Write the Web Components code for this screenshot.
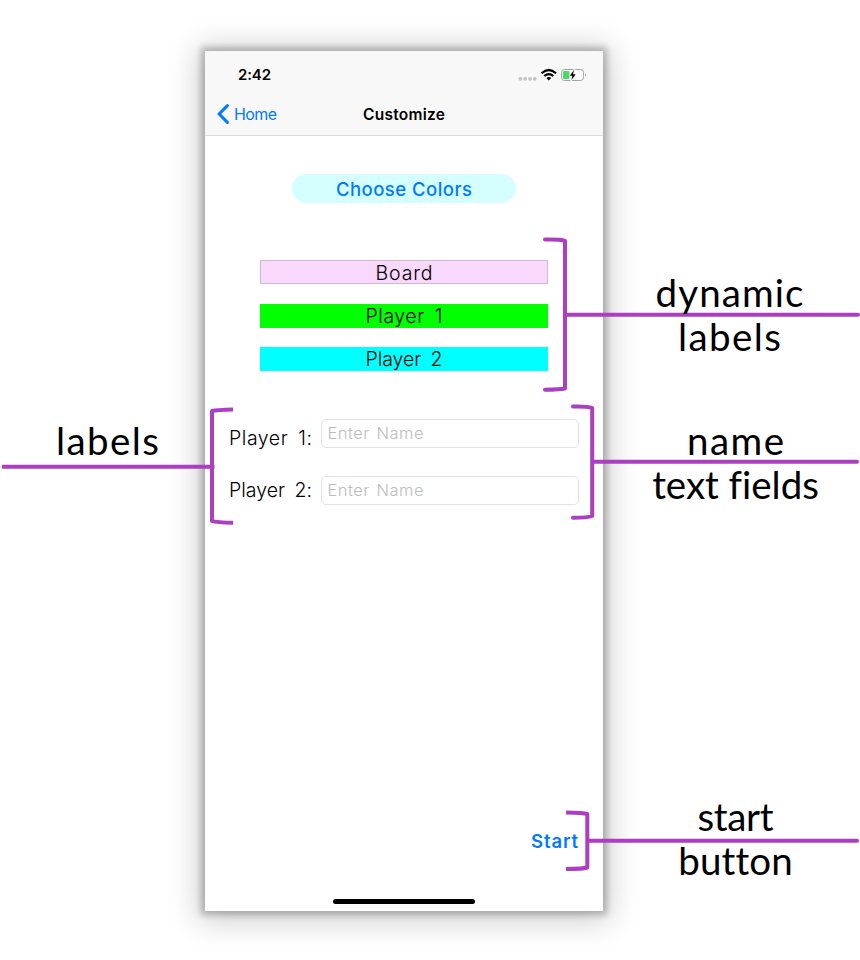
<!DOCTYPE html>
<html lang="en">
<head>
<meta charset="utf-8">
<title>Customize</title>
<style>
html,body{margin:0;background:#fff}
body{width:860px;height:960px;overflow:hidden}
</style>
</head>
<body>
<annotated-screen></annotated-screen>
<script>
const define = (name, html, init) => customElements.define(name, class extends HTMLElement {
  constructor() {
    super();
    this.attachShadow({mode: 'open'});
    const t = document.createElement('template');
    t.innerHTML = html;
    this.shadowRoot.append(t.content.cloneNode(true));
  }
  connectedCallback() { if (init) init(this, this.shadowRoot); }
});

// Text tracked so that its line fills the given width.
define('fit-text', `<style>:host{display:inline-block;white-space:pre}span{display:inline-block}</style><span><slot></slot></span>`, (el, root) => {
  const s = root.querySelector('span');
  const want = parseFloat(el.getAttribute('w'));
  requestAnimationFrame(() => {
    const n = el.textContent.length;
    const ls = (want - s.getBoundingClientRect().width) / (n - 1);
    s.style.letterSpacing = ls + 'px';
    s.style.marginRight = -ls + 'px';
  });
});

define('status-bar', `<style>
:host{display:flex;height:48px;box-sizing:border-box;padding:0 17px 0 33px;align-items:center;justify-content:space-between;font:600 15px/20px Inter,sans-serif;color:#000}
svg{display:block}
</style>
<fit-text w="33">2:42</fit-text>
<svg width="70" height="16" viewBox="0 0 70 16">
<g fill="#c2c2c2"><circle cx="4.4" cy="11.8" r="1.9"/><circle cx="9.2" cy="11.8" r="1.9"/><circle cx="14" cy="11.8" r="1.9"/><circle cx="18.8" cy="11.8" r="1.9"/></g>
<g fill="none" stroke="#000" stroke-width="2.2"><path d="M25.6 6.2Q32.8-.2 40 6.2"/><path d="M28.3 9Q32.8 5.1 37.3 9"/></g>
<path d="M30.4 11Q32.8 9 35.2 11L32.8 13.5Z"/>
<rect x="45.5" y="2.5" width="22" height="11" rx="3" fill="#fbfbfb" stroke="#a5a5a5"/>
<path d="M69 6.2q1.5 1.7 0 3.6z" fill="#999"/>
<rect x="47" y="4" width="6.4" height="8" rx="1" fill="#4cd964"/>
<path d="M58.7 2L53.6 8.5h2.6L54.9 14l5.8-7h-2.8z" stroke="#f8f8f8" stroke-width="1" fill="#f8f8f8"/>
<path d="M58 3L53.8 8.8h2.6L55.4 13l4.3-5.8h-2.7z"/>
</svg>`);

define('nav-bar', `<style>
:host{display:grid;grid-template-columns:1fr auto 1fr;height:37px;box-sizing:border-box;align-items:center;padding-bottom:6px;border-bottom:1.5px solid #dcdcdc;font:16px/20px Inter,sans-serif}
.back{display:flex;gap:4px;align-items:center;padding-left:12px;color:#007aff}
.title{font-weight:600;font-size:15.5px;color:#000;padding-top:2px}
</style>
<div class="back"><svg width="13" height="20" viewBox="0 0 13 20"><path d="M10.4 1.6L2.2 10l8.2 8.4" fill="none" stroke="#007aff" stroke-width="3" stroke-linecap="round"/></svg><fit-text w="43">Home</fit-text></div>
<div class="title"><fit-text w="82">Customize</fit-text></div><div></div>`);

define('color-label', `<style>
:host{display:block;box-sizing:border-box;height:24px;background:var(--c);border:var(--b,0);text-align:center;word-spacing:4px;font:300 19.5px/24px Inter,sans-serif;color:#000}
</style><slot></slot>`);

define('name-row', `<style>
:host{display:flex;justify-content:space-between;height:29px}
.l{font:300 19.5px/29px Inter,sans-serif;word-spacing:4px;color:#000;padding-top:var(--drop,0)}
.f{width:258px;height:29px;box-sizing:border-box;border:1px solid #e2e2e2;border-radius:5px;padding-left:6px;font:300 16.5px/27px Inter,sans-serif;word-spacing:2px;color:#bdbdc0}
</style><div class="l"><slot></slot></div><div class="f"><fit-text w="96">Enter Name</fit-text></div>`);

define('phone-screen', `<style>
:host{display:flex;flex-direction:column;width:398px;height:860px;background:#fff;box-shadow:0 0 7px 3px rgba(0,0,0,.17),0 0 5px 5px rgba(0,0,0,.08),0 3px 28px 7px rgba(0,0,0,.2)}
.head{background:#f8f8f8}
.choose{align-self:center;margin-top:38px;width:224px;height:29px;border-radius:15px;background:#d4feff;color:#007aff;text-align:center;font:500 18.5px/30px Inter,sans-serif}
.colors{display:flex;flex-direction:column;gap:19.3px;margin:57.4px 55px 0}
.names{display:flex;flex-direction:column;gap:28.5px;margin:48px 24.5px 0 24px}
.foot{margin-top:auto;display:flex;flex-direction:column}
.start{align-self:flex-end;margin-right:25px;color:#007aff;font:600 18.5px/29px Inter,sans-serif}
.bar{align-self:center;width:142px;height:5px;border-radius:3px;background:#000;margin:43px 0 7px}
</style>
<div class="head"><status-bar></status-bar><nav-bar></nav-bar></div>
<div class="choose"><fit-text w="136">Choose Colors</fit-text></div>
<div class="colors">
<color-label edged style="--c:#fad7fd;--b:1px solid #ccb9ce"><fit-text w="57">Board</fit-text></color-label>
<color-label style="--c:#0f0"><fit-text w="77">Player 1</fit-text></color-label>
<color-label style="--c:#0ff"><fit-text w="77">Player 2</fit-text></color-label>
</div>
<div class="names">
<name-row style="--drop:5px"><fit-text w="83">Player 1:</fit-text></name-row>
<name-row><fit-text w="83">Player 2:</fit-text></name-row>
</div>
<div class="foot"><div class="start"><fit-text w="47">Start</fit-text></div><div class="bar"></div></div>`);

// Lines and brackets placed freely over the phone.
define('callout-lines', `<style>:host{position:absolute;inset:0}svg{display:block}</style>
<svg width="860" height="960" fill="none" stroke="#ab3ec1" stroke-width="4" stroke-linecap="round" stroke-linejoin="round">
<path d="M545 239.5Q560 239.2 565 240.8V388.5Q560 389.5 545 389.8M565 314.7H858"/>
<path d="M573 406.5Q588 406.2 592.2 408V516Q588 517.8 573 517.8M592 461.7H857"/>
<path stroke-linecap="butt" d="M233 409.5Q216 410 212 411V521Q216 522.5 233 522.8M2 466.7H214.5"/>
<path stroke-linecap="butt" d="M566 812.5Q583 812.8 587.3 814V867.5Q583 869 566 869"/><path d="M588 840.7H857"/>
</svg>`);

define('callout-text', `<style>
:host{position:absolute;transform:translateX(-50%);text-align:center;white-space:nowrap;font:400 38.5px/44px Lato,sans-serif;color:#000}
</style><slot></slot>`);

define('annotated-screen', `<style>
:host{display:block;position:relative;width:860px;height:960px;overflow:hidden;background:#fff}
phone-screen{margin:51px 0 0 205px;position:absolute}
</style>
<phone-screen></phone-screen><callout-lines></callout-lines>
<callout-text style="left:729.5px;top:270px"><fit-text w="148">dynamic</fit-text><br><fit-text w="103">labels</fit-text></callout-text>
<callout-text style="left:735.5px;top:418px"><fit-text w="97">name</fit-text><br><fit-text w="166">text fields</fit-text></callout-text>
<callout-text style="left:107.5px;top:418px"><fit-text w="103">labels</fit-text></callout-text>
<callout-text style="left:735.5px;top:794px"><fit-text w="76">start</fit-text><br><fit-text w="113">button</fit-text></callout-text>`);
</script>
</body>
</html>
